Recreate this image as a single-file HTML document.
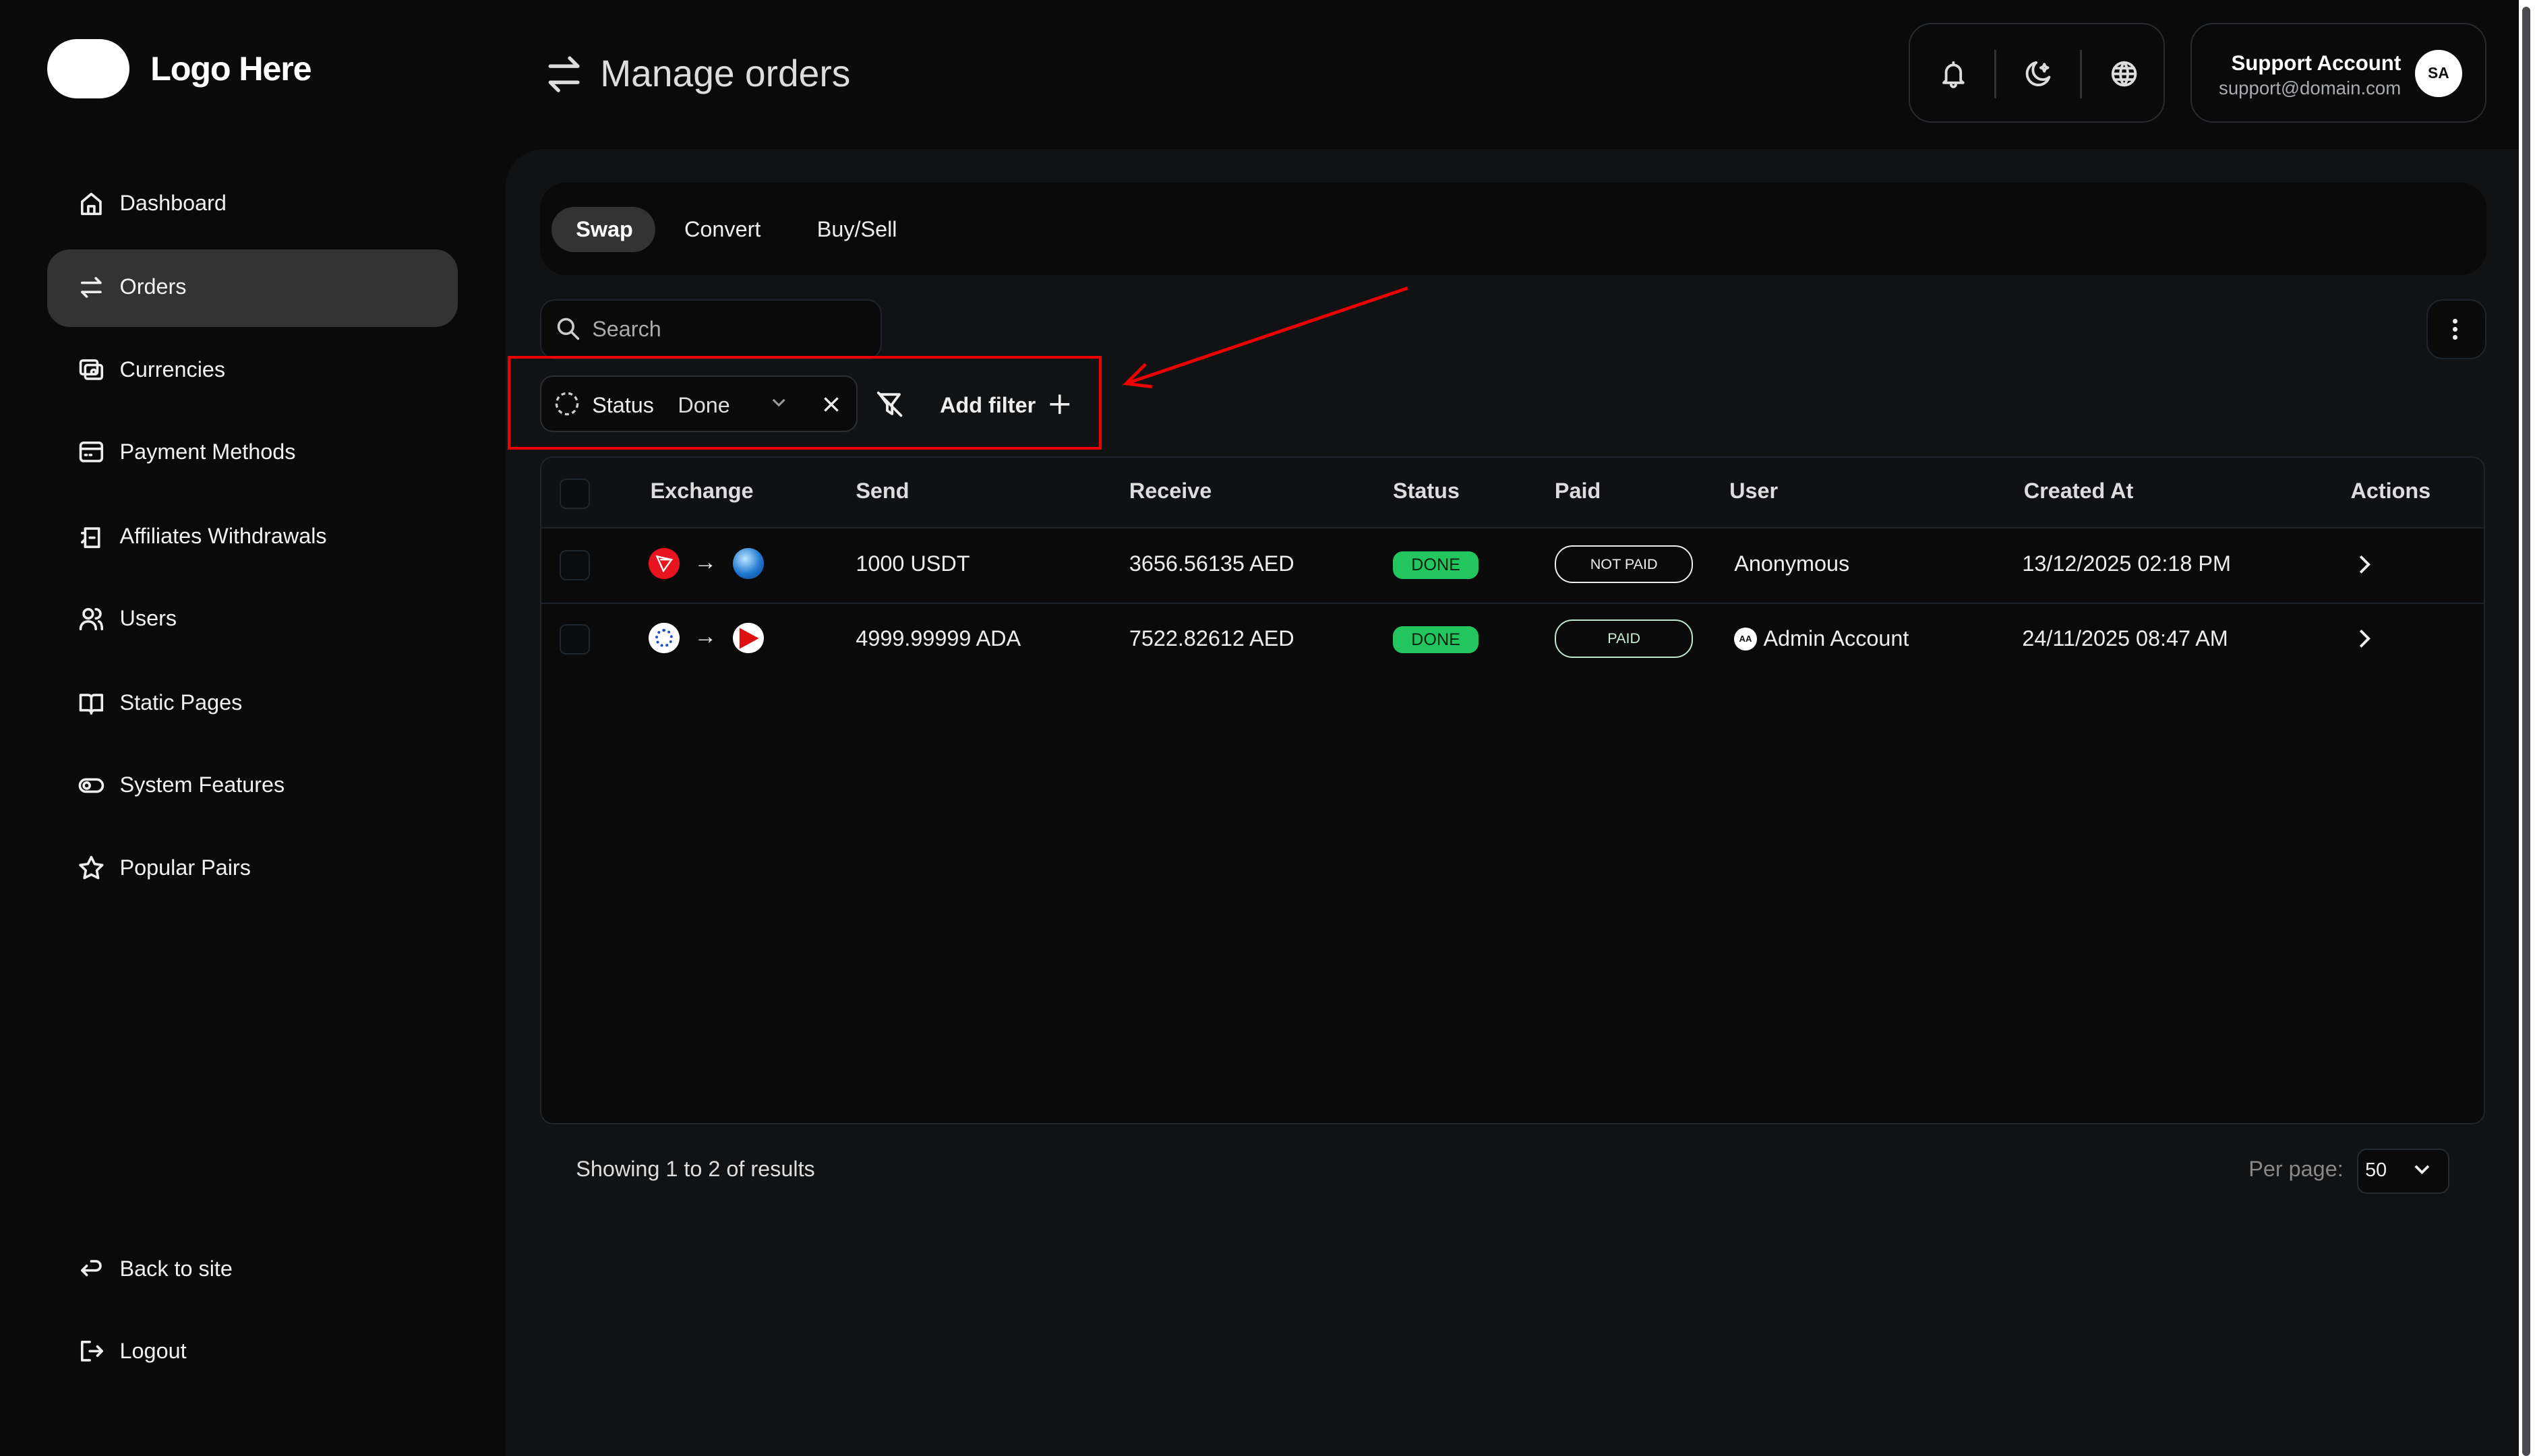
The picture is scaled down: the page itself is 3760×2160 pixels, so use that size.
<!DOCTYPE html>
<html><head><meta charset="utf-8"><style>
html,body{margin:0;padding:0;background:#0a0a0a;overflow:hidden}
body{width:1567px;height:900px;zoom:2.3995;position:relative;font-family:"Liberation Sans",sans-serif;color:#eee}
.a{position:absolute}
.nav{position:absolute;left:48px;font-size:13.5px;color:#f2f2f2;display:flex;align-items:center;gap:9px}
.nav svg{width:17px;height:17px;fill:none;stroke:#eee;stroke-width:1.6;stroke-linecap:round;stroke-linejoin:round}
.th{position:absolute;top:296px;font-size:13.5px;font-weight:bold;color:#ddd}
.td{position:absolute;font-size:13.5px;color:#eee}
.cb{position:absolute;left:346px;width:17px;height:17px;border:1px solid #1f262d;border-radius:4px;background:#0a0c0e}
.done{position:absolute;left:861px;width:53px;height:17px;border-radius:6px;background:#22c55e;color:#06210f;font-size:10.5px;text-align:center;line-height:17px}
.paid{position:absolute;left:961px;width:84px;height:22px;border-radius:11px;border:1px solid #eee;font-size:9px;text-align:center;line-height:22px}
.ico svg{fill:none;stroke:#ddd;stroke-width:1.6;stroke-linecap:round;stroke-linejoin:round}
</style></head><body>
<div class="a" style="left:29px;top:24px;width:51px;height:37px;border-radius:19px;background:#fff"></div>
<div class="a" style="left:93px;top:30px;font-size:21px;font-weight:bold;color:#fff;letter-spacing:-0.5px">Logo Here</div>
<svg class="a" style="left:337px;top:33px" width="23" height="26" viewBox="0 0 23 26" fill="none" stroke="#ddd" stroke-width="2.2" stroke-linecap="round" stroke-linejoin="round"><path d="M3 8h17l-5-5M20 18H3l5 5"/></svg>
<div class="a" style="left:371px;top:32px;font-size:23px;color:#ddd">Manage orders</div>
<div class="a ico" style="left:1180px;top:14px;width:158px;height:62px;border:1px solid #262c32;border-radius:14px;box-sizing:border-box">
<svg class="a" style="left:18px;top:22px" width="17" height="18" viewBox="0 0 17 18"><path d="M4 13V8a4.5 4.5 0 019 0v5l1.5 1.5h-12zM7 15.5a1.5 1.5 0 003 0M8.5 2v1.5"/></svg>
<div class="a" style="left:52px;top:16px;width:1px;height:30px;background:#333"></div>
<svg class="a" style="left:70px;top:22px" width="18" height="18" viewBox="0 0 18 18"><path d="M8 2a7 7 0 108 9A6 6 0 018 2zM13 3l.7 1.5 1.5.7-1.5.7L13 7.4l-.7-1.5-1.5-.7 1.5-.7z"/></svg>
<div class="a" style="left:105px;top:16px;width:1px;height:30px;background:#333"></div>
<svg class="a" style="left:123px;top:22px" width="18" height="18" viewBox="0 0 18 18"><circle cx="9" cy="9" r="7"/><path d="M2 9h14M3 5.5h12M3 12.5h12M9 2c-3 3.5-3 10.5 0 14M9 2c3 3.5 3 10.5 0 14"/></svg>
</div>
<div class="a" style="left:1354px;top:14px;width:183px;height:62px;border:1px solid #262c32;border-radius:14px;box-sizing:border-box">
<div class="a" style="right:52px;top:17px;font-size:13px;font-weight:bold;color:#fff;white-space:nowrap">Support Account</div>
<div class="a" style="right:52px;top:33px;font-size:11.5px;color:#a8abb0;white-space:nowrap">support@domain.com</div>
<div class="a" style="left:138px;top:16px;width:29px;height:29px;border-radius:50%;background:#fff;color:#111;font-size:9.5px;font-weight:bold;text-align:center;line-height:29px">SA</div>
</div>

<div class="nav" style="top:117px"><svg viewBox="0 0 18 18"><path d="M3 8l6-5 6 5v8H3zM7 16v-5h4v5"/></svg>Dashboard</div>
<div class="a" style="left:29px;top:154px;width:254px;height:48px;border-radius:14px;background:#333"></div>
<div class="nav" style="top:169px"><svg viewBox="0 0 18 18"><path d="M3 6h12l-3-3M15 12H3l3 3"/></svg>Orders</div>
<div class="nav" style="top:220px"><svg viewBox="0 0 18 18"><rect x="2" y="3" width="11" height="9" rx="1.5"/><rect x="5" y="6" width="11" height="9" rx="1.5"/><circle cx="10.5" cy="10.5" r="1.5"/></svg>Currencies</div>
<div class="nav" style="top:271px"><svg viewBox="0 0 18 18"><rect x="2" y="3" width="14" height="12" rx="2"/><path d="M2 7h14M5 11h1M8 11h1"/></svg>Payment Methods</div>
<div class="nav" style="top:323px"><svg viewBox="0 0 18 18"><path d="M5 4h9v12H5zM5 7H3M8 10h3M3 13l2-2"/></svg>Affiliates Withdrawals</div>
<div class="nav" style="top:374px"><svg viewBox="0 0 18 18"><circle cx="7" cy="6" r="3"/><path d="M2 16c0-3 2-5 5-5s5 2 5 5M12 3a3 3 0 010 6M14 11c1.5.5 2 2.5 2 5"/></svg>Users</div>
<div class="nav" style="top:426px"><svg viewBox="0 0 18 18"><path d="M2 4h5a2 2 0 012 2v10a2 2 0 00-2-2H2zM16 4h-5a2 2 0 00-2 2v10a2 2 0 012-2h5z"/></svg>Static Pages</div>
<div class="nav" style="top:477px"><svg viewBox="0 0 18 18"><rect x="1.5" y="5" width="15" height="8" rx="4"/><circle cx="6" cy="9" r="2"/></svg>System Features</div>
<div class="nav" style="top:528px"><svg viewBox="0 0 18 18"><path d="M9 2l2.2 4.5 5 .7-3.6 3.5.9 5L9 13.4 4.5 15.7l.9-5L1.8 7.2l5-.7z"/></svg>Popular Pairs</div>
<div class="nav" style="top:776px"><svg viewBox="0 0 18 18"><path d="M3 10h9a3 3 0 000-6H9M6 7l-3 3 3 3"/></svg>Back to site</div>
<div class="nav" style="top:827px"><svg viewBox="0 0 18 18"><path d="M8 3H3v12h5M8 9h8M13 6l3 3-3 3"/></svg>Logout</div>

<div class="a" style="left:312px;top:92px;width:1245px;height:808px;background:#111214;border-top-left-radius:24px"></div>
<div class="a" style="left:1557px;top:0;width:10px;height:900px;background:#fff"></div>
<div class="a" style="left:1559px;top:4px;width:5px;height:896px;border-radius:3px;background:#4a4b4f"></div>

<div class="a" style="left:334px;top:113px;width:1203px;height:57px;border-radius:16px;background:#0a0a0a"></div>
<div class="a" style="left:341px;top:128px;width:64px;height:28px;border-radius:14px;background:#333"></div>
<div class="a" style="left:356px;top:134px;font-size:13.5px;font-weight:bold;color:#fff">Swap</div>
<div class="a" style="left:423px;top:134px;font-size:13.5px;color:#eee">Convert</div>
<div class="a" style="left:505px;top:134px;font-size:13.5px;color:#eee">Buy/Sell</div>

<div class="a" style="left:334px;top:185px;width:211px;height:37px;border-radius:9px;background:#0a0a0a;border:1px solid #1d242b;box-sizing:border-box"></div>
<svg class="a" style="left:344px;top:196px" width="15" height="15" viewBox="0 0 15 15" fill="none" stroke="#ccc" stroke-width="1.5" stroke-linecap="round"><circle cx="6" cy="6" r="4.5"/><path d="M9.5 9.5l4 4"/></svg>
<div class="a" style="left:366px;top:196px;font-size:13.5px;color:#aaa">Search</div>
<div class="a" style="left:1500px;top:185px;width:37px;height:37px;border-radius:10px;background:#0a0a0a;border:1px solid #1d242b;box-sizing:border-box"></div>
<div class="a" style="left:1516px;top:197px;width:3px;height:3px;border-radius:50%;background:#eee;box-shadow:0 5px 0 #eee,0 10px 0 #eee"></div>

<div class="a" style="left:314px;top:220px;width:367px;height:58px;border:2px solid #e00;box-sizing:border-box"></div>
<div class="a" style="left:334px;top:232px;width:196px;height:35px;border-radius:8px;background:#0a0a0a;border:1px solid #2a2e33;box-sizing:border-box"></div>
<svg class="a" style="left:343px;top:242px" width="15" height="15" viewBox="0 0 15 15" fill="none" stroke="#ccc" stroke-width="1.4" stroke-dasharray="2.5 2"><circle cx="7.5" cy="7.5" r="6.5"/></svg>
<div class="a" style="left:366px;top:243px;font-size:13.5px;color:#eee">Status</div>
<div class="a" style="left:419px;top:243px;font-size:13.5px;color:#ddd">Done</div>
<svg class="a" style="left:476px;top:245px" width="11" height="8" viewBox="0 0 11 8" fill="none" stroke="#999" stroke-width="1.3"><path d="M2 2l3.5 3.5L9 2"/></svg>
<svg class="a" style="left:509px;top:245px" width="10" height="10" viewBox="0 0 10 10" fill="none" stroke="#eee" stroke-width="1.4"><path d="M1 1l8 8M9 1L1 9"/></svg>
<svg class="a" style="left:541px;top:241px" width="18" height="18" viewBox="0 0 18 18" fill="none" stroke="#eee" stroke-width="1.6" stroke-linecap="round" stroke-linejoin="round"><path d="M3 3h12l-4.5 6v6l-3-2V9zM2 2l14 14"/></svg>
<div class="a" style="left:581px;top:243px;font-size:13.5px;font-weight:bold;color:#eee">Add filter</div>
<svg class="a" style="left:648px;top:243px" width="14" height="14" viewBox="0 0 14 14" fill="none" stroke="#eee" stroke-width="1.5"><path d="M7 1v12M1 7h12"/></svg>
<svg class="a" style="left:690px;top:172px" width="185" height="72" viewBox="0 0 185 72" fill="none" stroke="#e00" stroke-width="2"><path d="M180 6L6 65M18 53L6 65 22 67"/></svg>

<div class="a" style="left:334px;top:282px;width:1202px;height:413px;border:1px solid #1f252b;border-radius:8px;box-sizing:border-box;background:#0a0a0a;overflow:hidden">
<div style="height:43px;background:#0f1115;border-bottom:1px solid #1c2228"></div>
<div style="height:46px;border-bottom:1px solid #1c2228"></div>
</div>
<div class="cb" style="top:296px"></div>
<div class="th" style="left:402px">Exchange</div><div class="th" style="left:529px">Send</div><div class="th" style="left:698px">Receive</div><div class="th" style="left:861px">Status</div><div class="th" style="left:961px">Paid</div><div class="th" style="left:1069px">User</div><div class="th" style="left:1251px">Created At</div><div class="th" style="left:1453px">Actions</div>

<div class="cb" style="top:340px"></div>
<div class="a" style="left:401px;top:339px;width:19px;height:19px;border-radius:50%;background:#e8141f"></div>
<svg class="a" style="left:405px;top:343px" width="11" height="11" viewBox="0 0 11 11" fill="none" stroke="#fff" stroke-width="1"><path d="M1 1l9 2-5 7zM1 1l4 9M3 3l7 0"/></svg>
<div class="a" style="left:429px;top:340px;font-size:14px;color:#eee">→</div>
<div class="a" style="left:453px;top:339px;width:19px;height:19px;border-radius:50%;background:radial-gradient(circle at 40% 35%,#bfe6ff,#1f78d1 55%,#0a3d8a)"></div>
<div class="td" style="left:529px;top:341px">1000 USDT</div>
<div class="td" style="left:698px;top:341px">3656.56135 AED</div>
<div class="done" style="top:341px">DONE</div>
<div class="paid" style="top:337px">NOT PAID</div>
<div class="td" style="left:1072px;top:341px">Anonymous</div>
<div class="td" style="left:1250px;top:341px">13/12/2025 02:18 PM</div>
<svg class="a" style="left:1456px;top:343px" width="10" height="12" viewBox="0 0 10 12" fill="none" stroke="#eee" stroke-width="1.6"><path d="M3 1l5 5-5 5"/></svg>

<div class="cb" style="top:386px"></div>
<div class="a" style="left:401px;top:385px;width:19px;height:19px;border-radius:50%;background:#fff"></div>
<div class="a" style="left:405px;top:389px;width:11px;height:11px;border-radius:50%;border:2px dotted #1a4bd1;box-sizing:border-box"></div>
<div class="a" style="left:429px;top:386px;font-size:14px;color:#eee">→</div>
<div class="a" style="left:453px;top:385px;width:19px;height:19px;border-radius:50%;background:#fff"></div>
<svg class="a" style="left:455px;top:387px" width="15" height="15" viewBox="0 0 15 15"><path d="M2 1l12 6.5L2 14z" fill="#d11"/></svg>
<div class="td" style="left:529px;top:387px">4999.99999 ADA</div>
<div class="td" style="left:698px;top:387px">7522.82612 AED</div>
<div class="done" style="top:387px">DONE</div>
<div class="paid" style="top:383px;border-color:#bfe8cf;color:#c9f0d6">PAID</div>
<div class="a" style="left:1072px;top:388px;width:14px;height:14px;border-radius:50%;background:#fff;color:#111;font-size:5.5px;font-weight:bold;text-align:center;line-height:14px">AA</div>
<div class="td" style="left:1090px;top:387px">Admin Account</div>
<div class="td" style="left:1250px;top:387px">24/11/2025 08:47 AM</div>
<svg class="a" style="left:1456px;top:389px" width="10" height="12" viewBox="0 0 10 12" fill="none" stroke="#eee" stroke-width="1.6"><path d="M3 1l5 5-5 5"/></svg>

<div class="a" style="left:356px;top:715px;font-size:13.5px;color:#ddd">Showing 1 to 2 of results</div>
<div class="a" style="left:1390px;top:715px;font-size:13.5px;color:#888">Per page:</div>
<div class="a" style="left:1457px;top:710px;width:57px;height:28px;border-radius:6px;background:#0a0a0a;border:1px solid #262c32;box-sizing:border-box"></div>
<div class="a" style="left:1462px;top:717px;font-size:12px;color:#eee">50</div>
<svg class="a" style="left:1491px;top:719px" width="12" height="9" viewBox="0 0 12 9" fill="none" stroke="#eee" stroke-width="1.6"><path d="M2 2l4 4 4-4"/></svg>
</body></html>
